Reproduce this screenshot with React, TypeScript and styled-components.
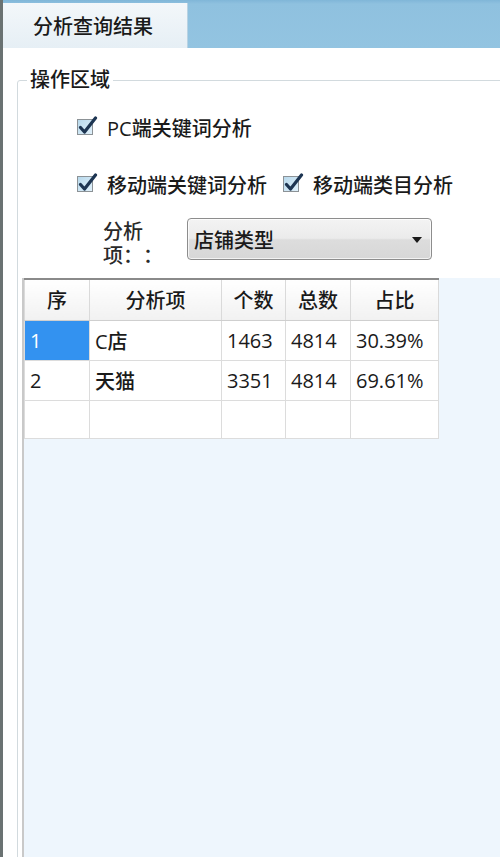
import React from "react";
import styled, { createGlobalStyle } from "styled-components";

const GlobalStyle = createGlobalStyle`
  html, body {
    margin: 0;
    padding: 0;
    background: #ffffff;
  }
  body {
    font-family: "Open Sans", "Noto Sans CJK SC", "Microsoft YaHei", sans-serif;
    font-weight: 500;
    color: #1a1a1a;
    text-spacing-trim: space-all;
  }
`;

const SWindow = styled.div`
  width: 500px;
  height: 857px;
  box-sizing: border-box;
  border-left: 3px solid #6a7272;
  display: flex;
  flex-direction: column;
  overflow: hidden;
  background: #ffffff;
`;

const STabStrip = styled.div`
  height: 48px;
  flex: none;
  display: flex;
  align-items: flex-end;
  background: linear-gradient(#80b6d8 0, #8fc1df 4px, #93c4e1 100%);
`;

const STab = styled.div`
  width: 185px;
  height: 45px;
  box-sizing: border-box;
  padding-left: 30px;
  display: flex;
  align-items: center;
  font-size: 20px;
  background: linear-gradient(#f3f7fa, #e6eff5);
  border-right: 1px solid #b9d3e3;
`;

const SBody = styled.div`
  flex: 1;
  min-height: 0;
  display: flex;
  flex-direction: column;
  padding: 20px 0 0 14px;
`;

const SGroup = styled.fieldset`
  flex: 1;
  min-height: 0;
  margin: 0 -10px -10px 0;
  padding: 0;
  border: 1px solid #d2dade;
  border-radius: 3px;
  display: flex;
  flex-direction: column;
  min-width: 0;

  & > legend {
    margin-left: 9px;
    padding: 0 3px;
    font-size: 20px;
    line-height: 24px;
  }
`;

const SOptions = styled.div`
  display: flex;
  flex-direction: column;
  padding: 20px 0 10px 59px;
`;

const SRow = styled.div<{ $gap?: number }>`
  display: flex;
  align-items: center;
  height: 30px;
  margin-top: ${(p) => p.$gap ?? 0}px;
`;

const SCheck = styled.label`
  display: flex;
  align-items: center;
  gap: 14px;
  font-size: 20px;
  margin-right: 16px;
`;

const SBox = styled.span`
  position: relative;
  width: 16px;
  height: 16px;
  box-sizing: border-box;
  border: 1px solid #8c9296;
  background: linear-gradient(135deg, #b8d9ec, #e0f0fa);
  flex: none;

  svg {
    position: absolute;
    left: 0;
    top: -4px;
  }
`;

const SItemRow = styled.div`
  display: flex;
  align-items: flex-start;
  margin-top: 19px;
  padding-left: 26px;
`;

const SItemLabel = styled.div`
  width: 84px;
  margin-top: 2px;
  font-size: 20px;
  line-height: 24px;
  color: #2a2a2a;
`;

const SCombo = styled.div`
  position: relative;
  width: 245px;
  height: 42px;
  box-sizing: border-box;
  border: 1px solid #8d8d8d;
  border-radius: 4px;
  background: linear-gradient(#f3f3f3 0%, #ebebeb 48%, #dddddd 52%, #d7d7d7 100%);
  box-shadow: inset 0 0 0 1px rgba(255, 255, 255, 0.7);
  display: flex;
  align-items: center;
  padding-left: 6px;
  font-size: 20px;

  &::after {
    content: "";
    position: absolute;
    right: 9px;
    top: 18px;
    border-left: 5px solid transparent;
    border-right: 5px solid transparent;
    border-top: 6px solid #1a1a1a;
  }
`;

const SGrid = styled.div`
  flex: 1;
  margin-left: 4px;
  border-left: 2px solid #c9c9c9;
  background: #eef6fd;
`;

const STable = styled.table`
  border-collapse: collapse;
  border-top: 2px solid #8a8a8a;
  table-layout: fixed;
  font-size: 20px;
`;

const STh = styled.th<{ $w: number }>`
  width: ${(p) => p.$w}px;
  height: 41px;
  box-sizing: border-box;
  padding: 0;
  font-weight: 500;
  text-align: center;
  background: linear-gradient(#ffffff, #f1f1f1);
  border: 1px solid #dadada;
  border-top: none;
  border-bottom-color: #cfcfcf;
`;

const STd = styled.td<{ $selected?: boolean; $h?: number }>`
  height: ${(p) => p.$h ?? 40}px;
  box-sizing: border-box;
  padding: 0 0 0 5px;
  background: ${(p) => (p.$selected ? "#3392f0" : "#ffffff")};
  color: ${(p) => (p.$selected ? "#ffffff" : "#1a1a1a")};
  border: 1px solid #dcdcdc;
  white-space: nowrap;
`;

const columns = [
  { title: "序", width: 65 },
  { title: "分析项", width: 132 },
  { title: "个数", width: 64 },
  { title: "总数", width: 65 },
  { title: "占比", width: 88 },
];

const rows = [
  ["1", "C店", "1463", "4814", "30.39%"],
  ["2", "天猫", "3351", "4814", "69.61%"],
  ["", "", "", "", ""],
];

function CheckBox() {
  return (
    <SBox>
      <svg width="20" height="20" viewBox="0 0 20 20">
        <path
          d="M2.5 11.5 L6.5 16 L17.5 2"
          fill="none"
          stroke="#1d3552"
          strokeWidth="3.2"
          strokeLinecap="round"
          strokeLinejoin="round"
        />
      </svg>
    </SBox>
  );
}

function Option({ text }: { text: string }) {
  return (
    <SCheck>
      <CheckBox />
      <span>{text}</span>
    </SCheck>
  );
}

export default function App() {
  return (
    <>
      <GlobalStyle />
      <SWindow>
        <STabStrip>
          <STab>分析查询结果</STab>
        </STabStrip>
        <SBody>
          <SGroup>
            <legend>操作区域</legend>
            <SOptions>
              <SRow>
                <Option text="PC端关键词分析" />
              </SRow>
              <SRow $gap={27}>
                <Option text="移动端关键词分析" />
                <Option text="移动端类目分析" />
              </SRow>
              <SItemRow>
                <SItemLabel>
                  分析
                  <br />
                  项：：
                </SItemLabel>
                <SCombo>店铺类型</SCombo>
              </SItemRow>
            </SOptions>
            <SGrid>
              <STable>
                <thead>
                  <tr>
                    {columns.map((c) => (
                      <STh key={c.title} $w={c.width}>
                        {c.title}
                      </STh>
                    ))}
                  </tr>
                </thead>
                <tbody>
                  {rows.map((r, i) => (
                    <tr key={i}>
                      {r.map((v, j) => (
                        <STd
                          key={j}
                          $selected={i === 0 && j === 0}
                          $h={i === 2 ? 38 : 40}
                        >
                          {v}
                        </STd>
                      ))}
                    </tr>
                  ))}
                </tbody>
              </STable>
            </SGrid>
          </SGroup>
        </SBody>
      </SWindow>
    </>
  );
}
